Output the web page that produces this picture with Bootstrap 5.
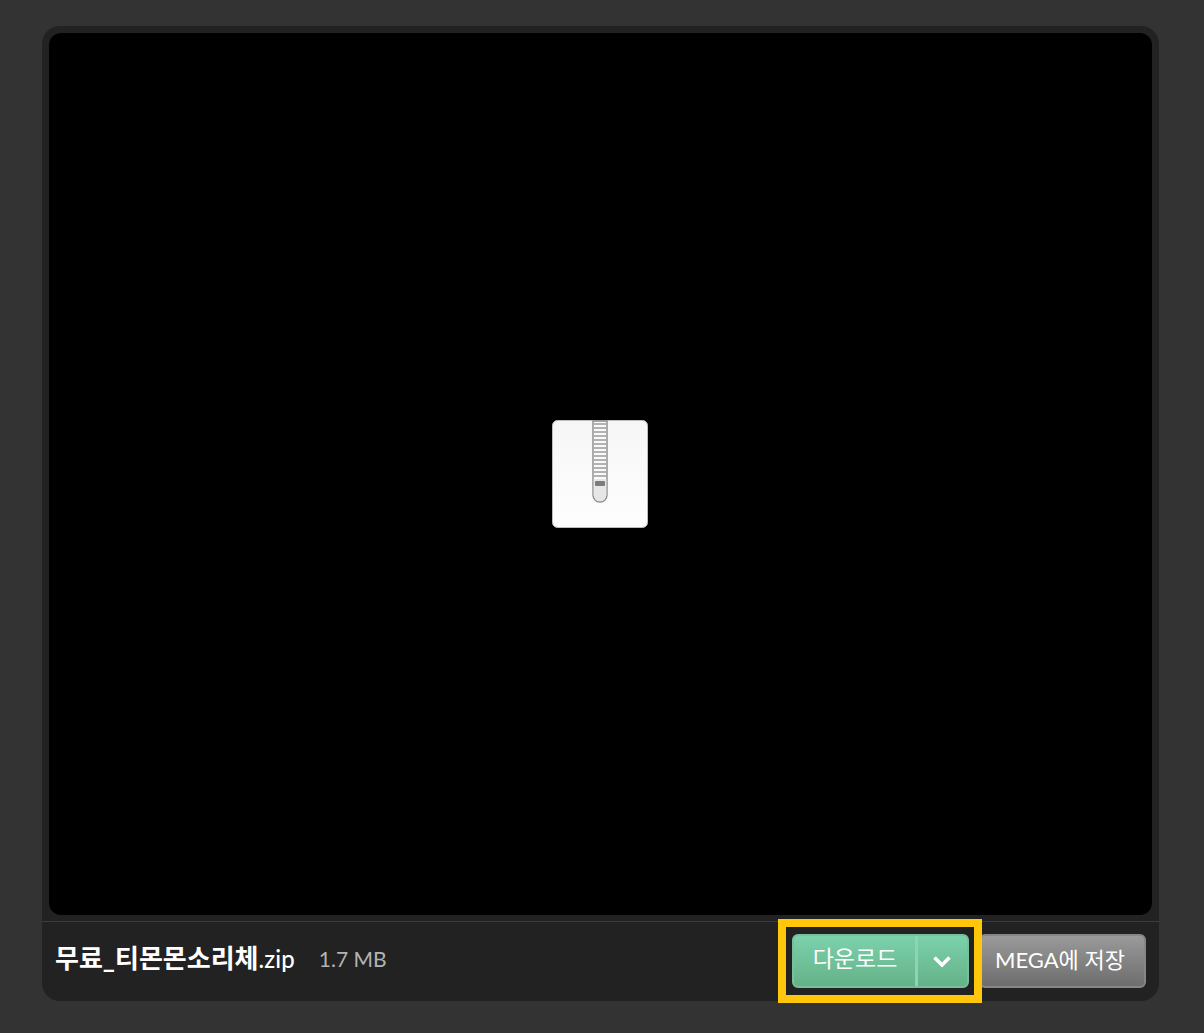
<!DOCTYPE html>
<html lang="ko">
<head>
  <meta charset="UTF-8" />
  <title>무료_티몬몬소리체.zip</title>
  <link href="https://cdn.jsdelivr.net/npm/bootstrap@5.3.0/dist/css/bootstrap.min.css" rel="stylesheet">
  <style>
    html, body { height: 100%; }
    body { background: #333; font-family: Lato, "Noto Sans CJK KR", sans-serif; padding: 26px 45px 32px 42px; }
    .viewer { height: 975px; background: #222; border-radius: 18px; }
    .preview { margin: 7px 7px 0; height: 882px; background: #000; border-radius: 12px; }
    .preview svg { margin-right: 2px; }
    .footer-bar { margin-top: 6px; height: 80px; border-top: 1px solid #3d3d3d; padding: 0 13px; }
    .file-info { margin-top: -6px; }
    .file-name { font-size: 26px; font-weight: 700; color: #fff; }
    .file-name span { font-size: 24px; font-weight: 500; letter-spacing: .1px; }
    .file-size { font-size: 21px; color: #b4b4b4; margin-left: 24px; }
    .dl-wrap { margin-top: -1px; }
    .dl-btn { width: 177px; height: 54px; border: 2px solid #79bf9a; border-radius: 6px; background: linear-gradient(#7bd1ac, #65b288); color: #fff; }
    .dl-main { width: 121px; font-size: 23px; padding: 0 0 6px 1px; }
    .dl-arrow { width: 52px; border-left: 3px solid #90d3b3; }
    .dl-arrow svg { margin-right: 2px; }
    .mega-btn { width: 167px; height: 54px; margin-left: 10px; border: 2px solid #868686; border-radius: 6px; background: linear-gradient(#9a9a9a, #6d6d6d); color: #fff; font-size: 22px; padding: 0 5px 4px 0; }
    .highlight { position: absolute; left: -14px; top: -15px; width: 204px; height: 84px; border: 8px solid #ffc60b; pointer-events: none; }
  </style>
</head>
<body>
  <div class="viewer d-flex flex-column">
    <div class="preview d-flex align-items-center justify-content-center">
      <svg width="96" height="108" viewBox="0 0 96 108" aria-label="zip">
        <defs>
          <linearGradient id="paper" x1="0" y1="0" x2="0" y2="1">
            <stop offset="0" stop-color="#f6f6f6"/><stop offset="1" stop-color="#fefefe"/>
          </linearGradient>
        </defs>
        <rect x=".5" y=".5" width="95" height="107" rx="5" fill="url(#paper)" stroke="#bdbdbd"/>
        <path d="M41 1h14v74a7 7 0 0 1-14 0z" fill="#fafafa" stroke="#8c8c8c" stroke-width="1.4"/>
        <path d="M42 4h12M42 8h12M42 12h12M42 16h12M42 20h12M42 24h12M42 28h12M42 32h12M42 36h12M42 40h12M42 44h12M42 48h12M42 52h12M42 56h12" stroke="#9a9a9a" stroke-width="1.3"/>
        <path d="M41.7 59h12.6v16a6.3 6.3 0 0 1-12.6 0z" fill="#e6e6e6"/>
        <rect x="43" y="61" width="10" height="5" rx="1" fill="#7c7c7c"/>
      </svg>
    </div>
    <div class="footer-bar d-flex align-items-center">
      <div class="file-info d-flex align-items-center">
        <div class="file-name">무료_티몬몬소리체<span>.zip</span></div>
        <div class="file-size">1.7 MB</div>
      </div>
      <div class="dl-wrap ms-auto d-flex position-relative">
        <div class="dl-btn d-flex">
          <div class="dl-main d-flex align-items-center justify-content-center">다운로드</div>
          <div class="dl-arrow d-flex align-items-center justify-content-center">
            <svg width="20" height="13" viewBox="0 0 20 13"><path d="M2.5 2.5 10 10l7.5-7.5" fill="none" stroke="#fff" stroke-width="3.6"/></svg>
          </div>
        </div>
        <div class="mega-btn d-flex align-items-center justify-content-center">MEGA에 저장</div>
        <div class="highlight"></div>
      </div>
    </div>
  </div>
  <script src="https://cdn.jsdelivr.net/npm/bootstrap@5.3.0/dist/js/bootstrap.bundle.min.js"></script>
</body>
</html>
